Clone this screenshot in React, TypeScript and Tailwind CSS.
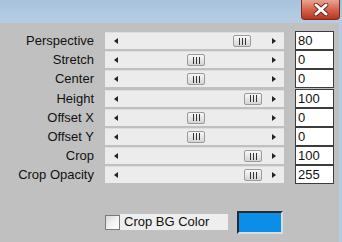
import React from 'react';

type Row = { label: string; value: string; thumb: number };

const rows: Row[] = [
  { label: 'Perspective', value: '80', thumb: 128 },
  { label: 'Stretch', value: '0', thumb: 82 },
  { label: 'Center', value: '0', thumb: 82 },
  { label: 'Height', value: '100', thumb: 139 },
  { label: 'Offset X', value: '0', thumb: 82 },
  { label: 'Offset Y', value: '0', thumb: 82 },
  { label: 'Crop', value: '100', thumb: 139 },
  { label: 'Crop Opacity', value: '255', thumb: 139 },
];

function Slider({ thumb }: { thumb: number }) {
  return (
    <div className="relative h-[17px] w-[179px] bg-[#ececec] border-t border-[#dedede]">
      {/* left arrow */}
      <div className="absolute left-[9px] top-[5px] w-0 h-0 border-y-[3.5px] border-y-transparent border-r-[4px] border-r-[#222]" />
      {/* right arrow */}
      <div className="absolute left-[167px] top-[5px] w-0 h-0 border-y-[3.5px] border-y-transparent border-l-[4px] border-l-[#222]" />
      <div
        className="absolute top-[2px] h-[12px] w-[18px] rounded-[2px] border border-[#9a9a9a] bg-gradient-to-b from-[#f8f8f8] to-[#d4d4d4] flex items-center justify-center gap-[2px]"
        style={{ left: thumb }}
      >
        <div className="w-px h-[7px] bg-[#333]" />
        <div className="w-px h-[7px] bg-[#333]" />
        <div className="w-px h-[7px] bg-[#333]" />
      </div>
    </div>
  );
}

export default function App() {
  return (
    <div className="w-[342px] h-[242px] flex flex-col overflow-hidden" style={{ fontFamily: '"Liberation Sans", Arial, sans-serif' }}>
      <div className="h-[23px] shrink-0 bg-gradient-to-b from-[#a9c2dd] to-[#b6cde4] flex justify-end pr-[2px]">
        <div className="w-[39px] h-[20px] rounded-b-[4px] border border-t-0 border-[#7d2a1c] bg-gradient-to-b from-[#e6a493] via-[#d4654d] to-[#b8341f] flex items-center justify-center">
          <svg width="18" height="13" viewBox="0 0 18 13">
            <path d="M4 2 L14 11 M14 2 L4 11" stroke="#6b2114" strokeWidth="4.6" strokeLinecap="round" />
            <path d="M4 2 L14 11 M14 2 L4 11" stroke="#ffffff" strokeWidth="3" strokeLinecap="round" />
          </svg>
        </div>
      </div>
      <div className="flex-1 flex bg-[#c0c0c0]">
        <div className="flex-1 flex flex-col pt-[9px]">
          <div className="flex flex-col gap-[2px]">
            {rows.map((r) => (
              <div key={r.label} className="flex items-start h-[17.2px]">
                <div className="w-[95px] text-right text-[13px] leading-[17px] text-[#111] pr-px">{r.label}</div>
                <div className="ml-[10px]">
                  <Slider thumb={r.thumb} />
                </div>
                <div className="ml-[11px] -mt-px w-[39px] h-[19px] bg-white border border-[#3c3c3c] text-[13px] leading-[17px] pl-[2px] text-[#111]">
                  {r.value}
                </div>
              </div>
            ))}
          </div>
          <div className="flex items-center mt-[27px] ml-[105px]">
            <div className="w-[15px] h-[15px] border border-[#7a7a7a] bg-gradient-to-br from-[#d8d8d8] via-[#f2f2f2] to-[#ffffff]" />
            <div className="w-[108px] h-[16px] bg-[#eeeeee] text-[13px] leading-[16px] pl-[4px] text-[#111]">Crop BG Color</div>
            <div className="ml-[9px] w-[46px] h-[23px] bg-[#0a8ee8] border-2 border-t-[#2a2a2a] border-l-[#2a2a2a] border-r-[#dcdcdc] border-b-[#dcdcdc]" />
          </div>
        </div>
        <div className="w-[3px] bg-[#b3cae2]" />
      </div>
    </div>
  );
}
